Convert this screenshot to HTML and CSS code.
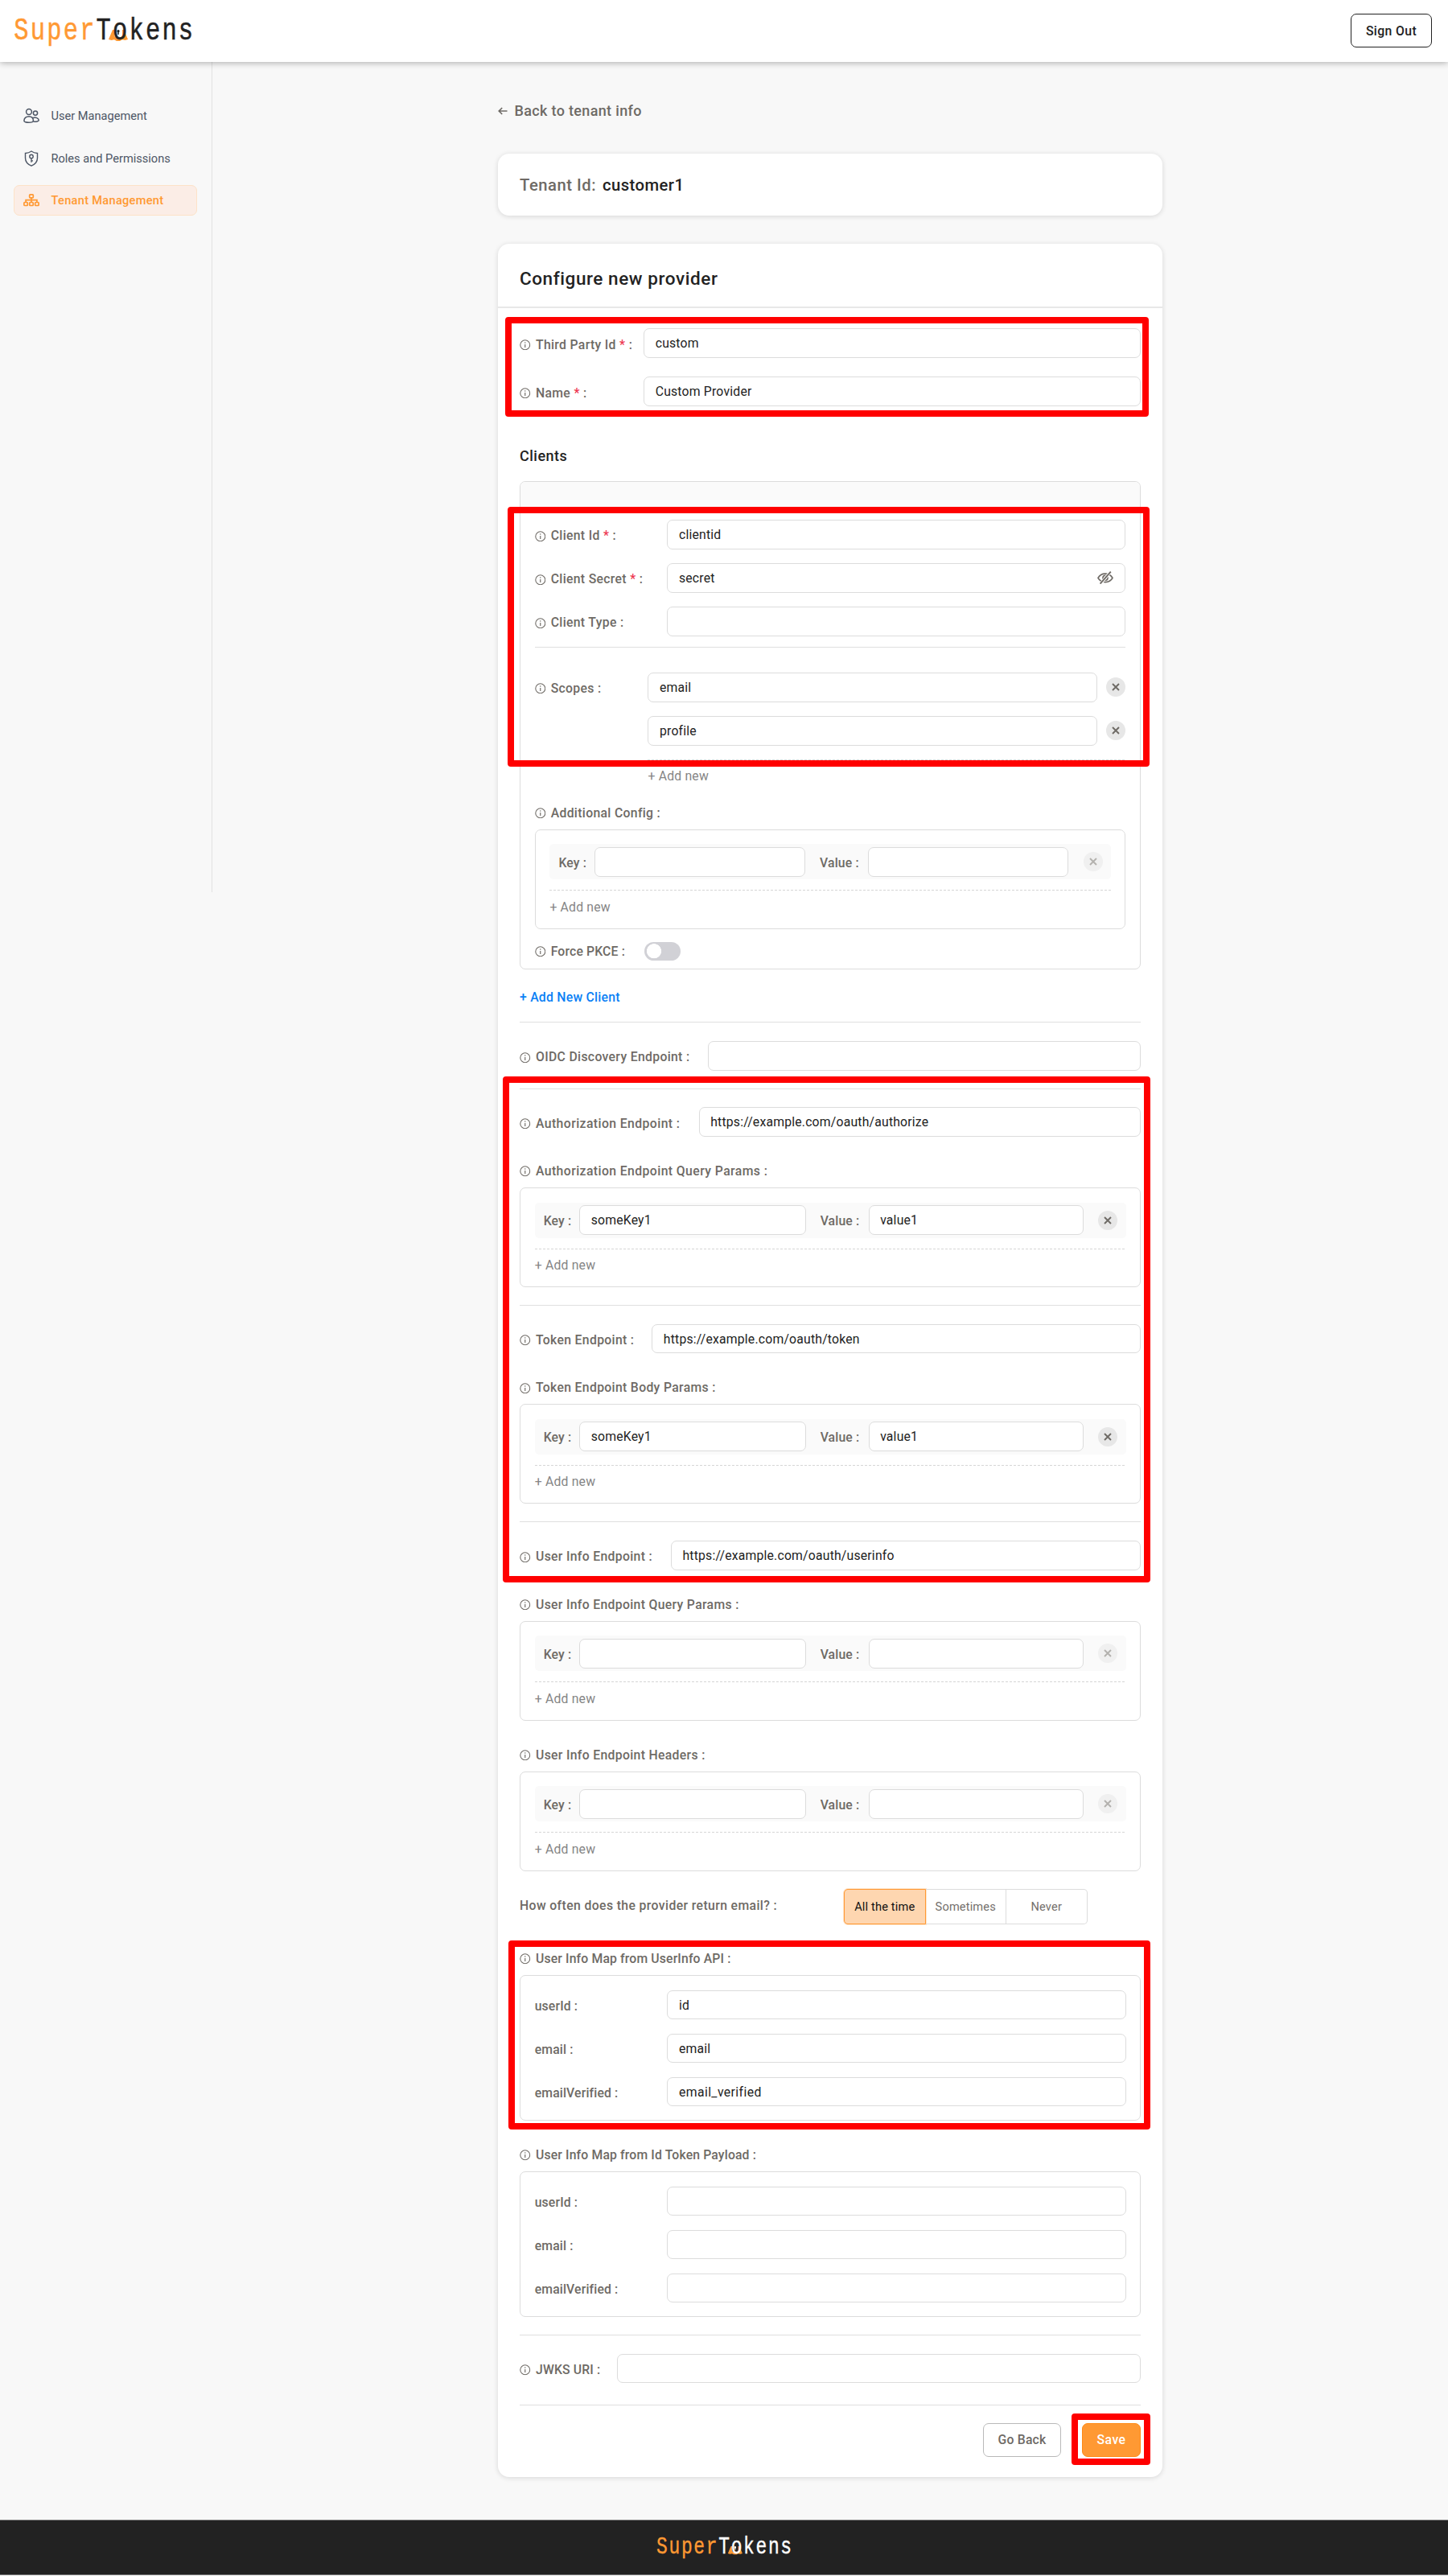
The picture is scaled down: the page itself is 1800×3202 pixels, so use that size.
FILE: index.html
```html
<!DOCTYPE html>
<html lang="en">
<head>
<meta charset="utf-8">
<title>SuperTokens Dashboard</title>
<link rel="stylesheet" href="styles.css">
</head>
<body>
<svg class="defs" width="0" height="0" aria-hidden="true">
  <symbol id="info" viewBox="0 0 14 14"><circle cx="7" cy="7" r="6.2" fill="none" stroke="currentColor" stroke-width="1.1"/><path d="M7 6.2V10.3" stroke="currentColor" stroke-width="1.2"/><circle cx="7" cy="4.2" r=".8" fill="currentColor"/></symbol>
  <symbol id="cross" viewBox="0 0 24 24"><path d="M8 8l8 8M16 8l-8 8" fill="none" stroke="currentColor" stroke-width="1.9"/></symbol>
  <symbol id="cape" viewBox="0 0 24 14"><path d="M5 0H19L24 12L20.500 13L17 12.300L14 14H10L7 12.300L3.500 13L0 12Z" fill="#ff9933"/></symbol>
  <symbol id="keyhole" viewBox="0 0 4 6"><circle cx="2" cy="1.700" r="1.600" fill="currentColor"/><path d="M2 2V6" stroke="currentColor" stroke-width="1.500"/></symbol>
</svg>

<header class="topbar">
  <svg class="logo" viewBox="0 0 230 60" width="230" height="60">
    <use href="#cape" x="119" y="37" width="24" height="14"/>
    <rect class="logo-hole" x="126" y="31" width="10" height="16" rx="4"/>
    <text class="logo-text" transform="scale(.8 1)" x="1.700" y="48.700"><tspan class="logo-super">Super</tspan><tspan>Tokens</tspan></text>
    <use href="#keyhole" x="129" y="37" width="4" height="6"/>
  </svg>
  <button class="sign-out">Sign Out</button>
</header>

<div class="layout">
  <nav class="sidebar">
    <a class="nav-item">
      <svg class="nav-icon" viewBox="0 0 20 20"><g fill="none" stroke="currentColor" stroke-width="1.500"><circle cx="7" cy="5" r="3.400"/><circle cx="15" cy="6.600" r="2.600"/><path d="M.9 16.200C.9 12.700 3.500 10.800 7 10.800S12.400 12.700 12.400 16.200C12.400 18.900 .9 18.900 .9 16.200Z"/><path d="M11.900 12.600C15.500 11.300 19.200 12.900 19.200 15.600C19.200 17 16 17.300 12.500 17.100"/></g></svg>
      <span>User Management</span>
    </a>
    <a class="nav-item">
      <svg class="nav-icon" viewBox="0 0 20 20"><g fill="none" stroke="currentColor" stroke-width="1.400"><path d="M10 1C12.300 2.600 14.800 3.300 17.500 3.500V9.500C17.500 14 14.300 17.300 10 19.200C5.700 17.300 2.500 14 2.500 9.500V3.500C5.200 3.300 7.700 2.600 10 1Z"/><circle cx="10" cy="7.400" r="2.200"/><path d="M10 9.600V14.800M10 12.900H12"/></g></svg>
      <span>Roles and Permissions</span>
    </a>
    <a class="nav-item nav-active">
      <svg class="nav-icon" viewBox="0 0 20 20"><g fill="none" stroke="currentColor" stroke-width="1.700"><rect x="7.700" y="2.800" width="4.600" height="4" rx=".8"/><rect x=".9" y="12.500" width="4.400" height="4" rx=".8"/><rect x="7.800" y="12.500" width="4.400" height="4" rx=".8"/><rect x="14.700" y="12.500" width="4.400" height="4" rx=".8"/><path d="M10 6.800V12.500M3.100 12.500V9.700H16.900V12.500"/></g></svg>
      <span>Tenant Management</span>
    </a>
  </nav>

  <main class="main">
    <a class="back"><svg class="back-arrow" viewBox="0 0 12 12"><path d="M11.500 6H1.200M5.200 2L1.200 6L5.200 10" fill="none" stroke="currentColor" stroke-width="1.600"/></svg>Back to tenant info</a>

    <section class="card tenant">
      <span class="tenant-label">Tenant Id:</span><span class="tenant-id">customer1</span>
    </section>

    <section class="card provider">
      <h1 class="title">Configure new provider</h1>
      <div class="form">
        <div class="field basic-field"><label class="label w-basic"><svg class="info"><use href="#info"/></svg>Third Party Id <i class="req">*</i> :</label><div class="input">custom</div></div>
        <div class="field basic-field"><label class="label w-basic"><svg class="info"><use href="#info"/></svg>Name <i class="req">*</i> :</label><div class="input">Custom Provider</div></div>

        <h2 class="subtitle">Clients</h2>
        <div class="client">
          <div class="client-head"></div>
          <div class="client-body">
            <div class="stack">
              <div class="field"><label class="label w-client"><svg class="info"><use href="#info"/></svg>Client Id <i class="req">*</i> :</label><div class="input">clientid</div></div>
              <div class="field"><label class="label w-client"><svg class="info"><use href="#info"/></svg>Client Secret <i class="req">*</i> :</label><div class="input">secret<svg class="eye" viewBox="0 0 20 16"><g fill="none" stroke="currentColor"><path d="M1 8.300C4.800 1.300 15.200 1.300 19 8.300C15.200 15.300 4.800 15.300 1 8.300Z" stroke-width="1.700"/><circle cx="10" cy="8.300" r="3" stroke-width="1.700"/><path d="M16.500 .6L4 15.700" stroke="#fff" stroke-width="3.600"/><path d="M16.800 .6L3.600 15.600" stroke-width="1.900"/></g></svg></div></div>
              <div class="field"><label class="label w-client"><svg class="info"><use href="#info"/></svg>Client Type :</label><div class="input"></div></div>
            </div>
            <div class="rule rule-client"></div>
            <div class="scopes">
              <label class="label w-scopes"><svg class="info"><use href="#info"/></svg>Scopes :</label>
              <div class="scope-list">
                <div class="field"><div class="input">email</div><svg class="remove"><use href="#cross"/></svg></div>
                <div class="field"><div class="input">profile</div><svg class="remove"><use href="#cross"/></svg></div>
                <div class="dashed scope-dash"></div>
                <div class="add">+ Add new</div>
              </div>
            </div>
            <label class="label config-label"><svg class="info"><use href="#info"/></svg>Additional Config :</label>
            <div class="box">
              <div class="kv"><label class="kv-label">Key :</label><div class="input kv-key"></div><label class="kv-label kv-value-label">Value :</label><div class="input kv-value"></div><svg class="remove faded"><use href="#cross"/></svg></div>
              <div class="dashed"></div>
              <div class="add">+ Add new</div>
            </div>
            <div class="pkce"><label class="label tight w-pkce"><svg class="info"><use href="#info"/></svg>Force PKCE :</label><span class="toggle"></span></div>
          </div>
        </div>
        <div class="add-client">+ Add New Client</div>

        <div class="rule rule-add"></div>
        <div class="field"><label class="label w-oidc"><svg class="info"><use href="#info"/></svg>OIDC Discovery Endpoint :</label><div class="input"></div></div>

        <div class="rule"></div>
        <div class="field"><label class="label loose w-auth"><svg class="info"><use href="#info"/></svg>Authorization Endpoint :</label><div class="input">https://example.com/oauth/authorize</div></div>
        <label class="label loose block-label"><svg class="info"><use href="#info"/></svg>Authorization Endpoint Query Params :</label>
        <div class="box">
          <div class="kv"><label class="kv-label">Key :</label><div class="input kv-key">someKey1</div><label class="kv-label kv-value-label">Value :</label><div class="input kv-value">value1</div><svg class="remove"><use href="#cross"/></svg></div>
          <div class="dashed"></div>
          <div class="add">+ Add new</div>
        </div>

        <div class="rule"></div>
        <div class="field"><label class="label w-token"><svg class="info"><use href="#info"/></svg>Token Endpoint :</label><div class="input">https://example.com/oauth/token</div></div>
        <label class="label block-label"><svg class="info"><use href="#info"/></svg>Token Endpoint Body Params :</label>
        <div class="box">
          <div class="kv"><label class="kv-label">Key :</label><div class="input kv-key">someKey1</div><label class="kv-label kv-value-label">Value :</label><div class="input kv-value">value1</div><svg class="remove"><use href="#cross"/></svg></div>
          <div class="dashed"></div>
          <div class="add">+ Add new</div>
        </div>

        <div class="rule"></div>
        <div class="field"><label class="label w-user"><svg class="info"><use href="#info"/></svg>User Info Endpoint :</label><div class="input">https://example.com/oauth/userinfo</div></div>
        <label class="label block-label"><svg class="info"><use href="#info"/></svg>User Info Endpoint Query Params :</label>
        <div class="box">
          <div class="kv"><label class="kv-label">Key :</label><div class="input kv-key"></div><label class="kv-label kv-value-label">Value :</label><div class="input kv-value"></div><svg class="remove faded"><use href="#cross"/></svg></div>
          <div class="dashed"></div>
          <div class="add">+ Add new</div>
        </div>
        <label class="label block-label"><svg class="info"><use href="#info"/></svg>User Info Endpoint Headers :</label>
        <div class="box">
          <div class="kv"><label class="kv-label">Key :</label><div class="input kv-key"></div><label class="kv-label kv-value-label">Value :</label><div class="input kv-value"></div><svg class="remove faded"><use href="#cross"/></svg></div>
          <div class="dashed"></div>
          <div class="add">+ Add new</div>
        </div>

        <div class="often">
          <label class="often-label">How often does the provider return email? :</label>
          <div class="segments"><span class="segment selected">All the time</span><span class="segment">Sometimes</span><span class="segment">Never</span></div>
        </div>

        <label class="label tight block-label"><svg class="info"><use href="#info"/></svg>User Info Map from UserInfo API :</label>
        <div class="box map">
          <div class="field"><label class="label tight w-client">userId :</label><div class="input">id</div></div>
          <div class="field"><label class="label tight w-client">email :</label><div class="input">email</div></div>
          <div class="field"><label class="label tight w-client">emailVerified :</label><div class="input wide">email_verified</div></div>
        </div>
        <label class="label tight block-label"><svg class="info"><use href="#info"/></svg>User Info Map from Id Token Payload :</label>
        <div class="box map">
          <div class="field"><label class="label tight w-client">userId :</label><div class="input"></div></div>
          <div class="field"><label class="label tight w-client">email :</label><div class="input"></div></div>
          <div class="field"><label class="label tight w-client">emailVerified :</label><div class="input"></div></div>
        </div>

        <div class="rule"></div>
        <div class="field"><label class="label tight w-jwks"><svg class="info"><use href="#info"/></svg>JWKS URI :</label><div class="input"></div></div>
        <div class="rule rule-last"></div>
        <div class="actions"><button class="btn">Go Back</button><button class="btn save">Save</button></div>
      </div>
    </section>
  </main>
</div>

<footer class="footer">
  <svg class="footer-logo" viewBox="0 0 230 60" width="173.600" height="45.300">
    <use href="#cape" x="119" y="37" width="24" height="14"/>
    <rect class="logo-hole" x="126" y="31" width="10" height="16" rx="4"/>
    <text class="logo-text" transform="scale(.8 1)" x="1.700" y="48.700"><tspan class="logo-super">Super</tspan><tspan>Tokens</tspan></text>
    <use href="#keyhole" x="129" y="37" width="4" height="6"/>
  </svg>
</footer>

<div class="mark mark-basic"></div>
<div class="mark mark-client"></div>
<div class="mark mark-endpoints"></div>
<div class="mark mark-map"></div>
<div class="mark mark-save"></div>
</body>
</html>
```
FILE: styles.css
```css
* { box-sizing: border-box; }
body {
  margin: 0;
  position: relative;
  width: 1800px;
  height: 3202px;
  overflow: hidden;
  background: #f8f8f8;
  color: #222;
  font: 15.75px/20px Roboto, sans-serif;
}
.defs { display: block; height: 0; }
button { font-family: inherit; background: #fff; padding: 0; }

/* top bar */
.topbar {
  position: relative;
  display: flex;
  justify-content: space-between;
  align-items: flex-start;
  height: 77px;
  padding: 0 20px 0 16px;
  background: #fff;
  box-shadow: 0 1px 8px rgba(0, 0, 0, .32);
}
.logo { display: block; color: #222; }
.logo-text { font: 38px "Liberation Mono", monospace; letter-spacing: 2.760px; fill: currentColor; stroke: currentColor; stroke-width: .5; }
.logo-super { fill: #ff9933; stroke: #ff9933; }
.logo-hole { fill: #fff; }
.sign-out {
  width: 101px;
  height: 42px;
  margin-top: 17px;
  border: 1px solid #222;
  border-radius: 7px;
  color: #222;
  font-size: 15.75px;
  font-weight: 500;
  letter-spacing: .4px;
}

/* sidebar */
.layout { display: flex; align-items: flex-start; height: 3055px; }
.sidebar {
  display: flex;
  flex-direction: column;
  gap: 14.5px;
  width: 264px;
  height: 1032px;
  padding: 48px 18px 0 17px;
  border-right: 1px solid #e2e2e2;
}
.nav-item {
  display: flex;
  align-items: center;
  height: 38px;
  padding-left: 10.500px;
  border: 1px solid transparent;
  border-radius: 7px;
  color: #4d5665;
  font-size: 14.6px;
}
.nav-icon { width: 20px; height: 20px; margin-right: 15px; }
.nav-active { color: #ff9933; background: #fbede6; border-color: #fde2c8; font-weight: 500; letter-spacing: .3px; }

/* main column */
.main { width: 826px; margin-left: 355px; padding-top: 50px; }
.back { display: flex; align-items: center; height: 22px; color: #6e6a65; font-size: 18px; font-weight: 500; letter-spacing: .34px; }
.back-arrow { width: 12px; height: 12px; margin-right: 8.500px; }
.card { background: #fff; border-radius: 14px; box-shadow: 0 1px 6px rgba(0, 0, 0, .14); }
.tenant { display: flex; align-items: center; gap: 8px; height: 77px; margin-top: 42px; padding-left: 27px; font-size: 20.25px; font-weight: 500; }
.tenant-label { color: #6e6a65; letter-spacing: .5px; }
.tenant-id { letter-spacing: .45px; }
.provider { margin-top: 35px; height: 2776px; }
.title { display: flex; align-items: center; height: 80px; margin: 0; padding: 8px 27px 0; border-bottom: 2px solid #e8e8e8; font-size: 22.5px; font-weight: 500; letter-spacing: .58px; }
.form { padding: 2px 27px 0; }

/* fields */
.field { display: flex; align-items: center; height: 36.800px; }
.basic-field { margin-top: 23.200px; }
.input {
  position: relative;
  flex: 1;
  height: 36.800px;
  padding: 0 13.500px;
  border: 1px solid #dcdcdc;
  border-radius: 7px;
  background: #fff;
  color: #222;
  line-height: 35px;
  letter-spacing: .2px;
  white-space: nowrap;
}
.wide { letter-spacing: .4px; }
.label { display: flex; align-items: center; height: 20px; color: #6e6a65; font-weight: 500; letter-spacing: .33px; white-space: pre; }
.tight { letter-spacing: .15px; }
.loose { letter-spacing: .42px; }
.field .label { height: 23px; padding-top: 4px; }
.info { width: 13.500px; height: 13.500px; margin-right: 6.500px; }
.req { color: #ed344e; font-style: normal; }
.w-basic { width: 154.200px; }
.w-client { width: 164.800px; }
.w-scopes { width: 140.800px; margin-top: 8px; }
.w-pkce { width: 136px; }
.w-oidc { width: 233.700px; }
.w-auth { width: 222.700px; }
.w-token { width: 164.300px; }
.w-user { width: 188px; }
.w-jwks { width: 120.700px; }
.scopes .w-scopes { margin-top: 10px; }
.eye { position: absolute; right: 14px; top: 9px; width: 20px; height: 16px; color: #6e6a65; }

/* clients */
.subtitle { margin: 51px 0 20.500px; font-size: 18px; line-height: 22px; font-weight: 500; letter-spacing: .5px; }
.client { height: 607px; border: 1px solid #dcdcdc; border-radius: 7px; overflow: hidden; }
.client-head { height: 35px; background: #fafafa; border-bottom: 1px solid #e8e8e8; }
.client-body { padding: 11.500px 17.700px 0; }
.stack { display: flex; flex-direction: column; gap: 17.200px; }
.rule { height: 1px; margin: 22px 0 22.500px; background: #dfdfdf; }
.rule-client { margin: 13.500px 0 30.500px; }
.scopes { display: flex; align-items: flex-start; }
.scope-list { flex: 1; }
.scope-list .field { margin-bottom: 17.200px; }
.scope-list .remove { margin: 0 0 0 11px; }
.dashed { height: 1px; margin-top: 13px; background: repeating-linear-gradient(90deg, #d6d6d6 0 3px, transparent 3px 5px); }
.scopes .scope-dash { margin-top: 0; }
.add { margin-top: 10.500px; color: #858585; letter-spacing: .2px; }
.config-label { margin: 25.500px 0 10px; }
.pkce { display: flex; align-items: center; height: 23px; margin-top: 16.500px; }
.toggle { width: 45px; height: 22.500px; border-radius: 12px; background: radial-gradient(circle at 12px 11.250px, #fff 8.800px, transparent 9.300px) #d1d1d6; }
.add-client { margin-top: 24.500px; color: #0a7ff5; font-weight: 500; letter-spacing: .25px; }
.rule-add { margin-top: 20.500px; }

/* key-value boxes */
.block-label { margin: 33px 0 10px; }
.box { height: 124px; padding: 17.500px 17.200px 0 17.700px; border: 1px solid #dcdcdc; border-radius: 7px; }
.kv { display: flex; align-items: center; height: 44px; padding: 0 10.500px 0 11px; border-radius: 5px; background: #fafafa; }
.kv-label { flex: none; padding-top: 3px; color: #6e6a65; font-weight: 500; letter-spacing: .15px; white-space: nowrap; width: 44.500px; }
.kv-value-label { width: 60px; margin-left: 18px; }
.kv-key { flex: 1.060 1 0; }
.kv-value { flex: 1 1 0; }
.remove { flex: none; width: 24px; height: 24px; margin-left: 18.500px; border-radius: 50%; background: #e7e7e7; color: #6e6a65; }
.faded { opacity: .5; }
.map { display: flex; flex-direction: column; gap: 17.200px; height: 181px; }

/* email frequency */
.often { display: flex; align-items: flex-start; height: 44px; margin-top: 22.500px; }
.often-label { width: 403px; margin-top: 11px; color: #6e6a65; font-weight: 500; letter-spacing: .39px; white-space: nowrap; }
.segments { display: flex; }
.segment { width: 100.500px; height: 44px; border: 1px solid #dcdcdc; border-left-width: 0; color: #74706c; text-align: center; font-size: 14.600px; line-height: 43px; letter-spacing: .15px; }
.segment:last-child { border-radius: 0 5px 5px 0; }
.selected { width: 101.500px; border: 1px solid #ff9933; border-radius: 5px 0 0 5px; background: #fed6b0; box-shadow: 0 0 0 1px #fee5cc; color: #111; }

/* actions */
.rule-last { margin: 26.500px 0 22px; }
.actions { display: flex; justify-content: flex-end; gap: 26px; }
.btn { width: 97px; height: 42px; border: 1px solid #b9b9b9; border-radius: 7px; color: #6e6a65; font-size: 15.750px; font-weight: 500; letter-spacing: .2px; }
.save { width: 73px; border-color: #ff8a15; background: #ff9933; color: #fff; letter-spacing: .5px; }

/* footer */
.footer { display: flex; height: 69px; padding: 4px 0 0 815px; background: #222; border-top: 1px solid #777; border-bottom: 1px solid #777; color: #fff; }
.footer-logo { display: block; }
.footer-logo .logo-hole { fill: #222; }

/* highlighted regions */
.mark { position: absolute; border: 8px solid #f00; border-radius: 4px; }
.mark-basic { left: 628px; top: 394px; width: 800px; height: 124px; }
.mark-client { left: 631px; top: 630px; width: 798px; height: 323px; }
.mark-endpoints { left: 625px; top: 1338px; width: 805px; height: 629px; }
.mark-map { left: 632px; top: 2412px; width: 798px; height: 235px; }
.mark-save { left: 1332px; top: 3000px; width: 98px; height: 64px; }
```
